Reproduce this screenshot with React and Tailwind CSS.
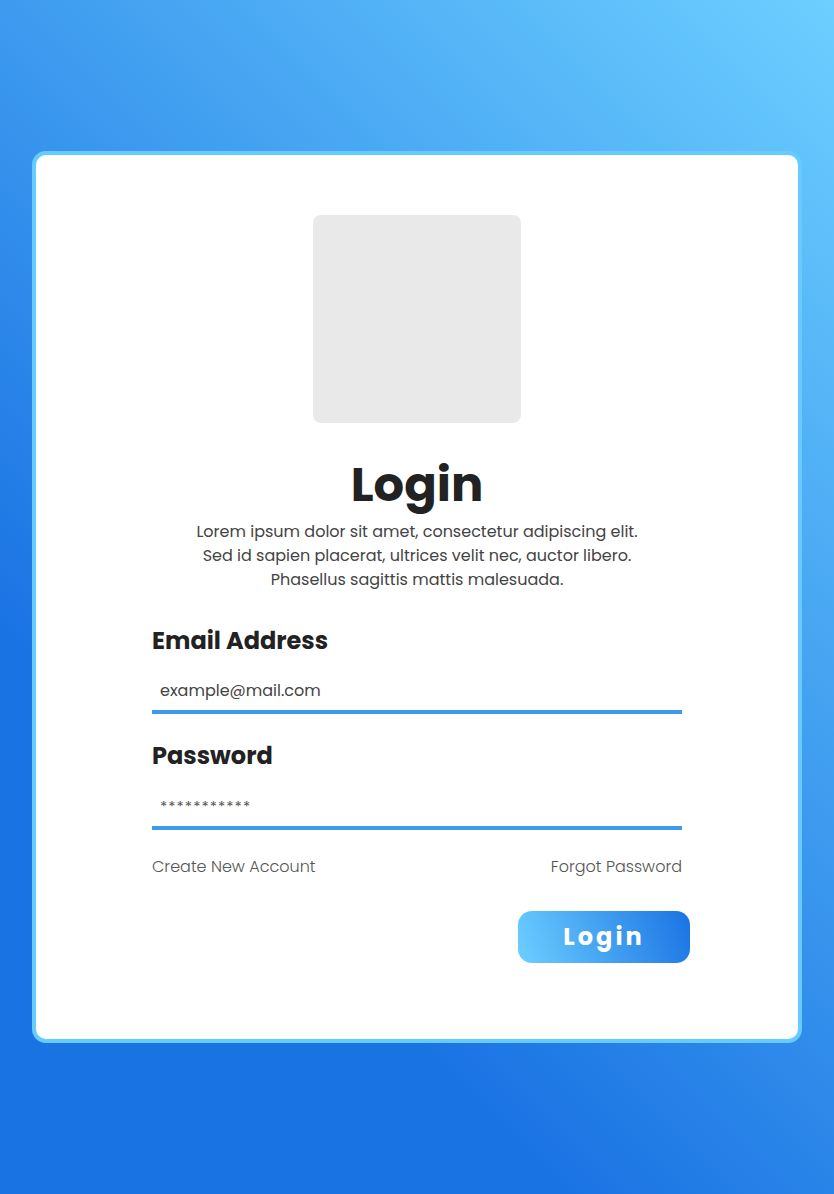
export default function App() {
  const font = { fontFamily: '"Poppins", "Noto Sans", "DejaVu Sans", sans-serif' };
  return (
    <div
      className="w-[834px] h-[1194px] bg-[linear-gradient(225deg,#6ccfff_0%,#1a73e3_72%,#1a73e3_100%)] flex flex-col items-center pt-[151px]"
      style={font}
    >
      <div className="w-[770px] h-[892px] rounded-[14px] border-4 border-[#66ccff] bg-white flex flex-col items-center pt-[60px]">
        <div className="w-[208px] h-[208px] rounded-[8px] bg-[#e9e9e9]" />
        <h1 className="mt-[34px] text-[48px] leading-[56px] font-bold text-[#222222]">Login</h1>
        <p className="mt-[7px] text-[16px] leading-[24px] text-[#444444] text-center">
          Lorem ipsum dolor sit amet, consectetur adipiscing elit.
          <br />
          Sed id sapien placerat, ultrices velit nec, auctor libero.
          <br />
          Phasellus sagittis mattis malesuada.
        </p>
        <div className="w-[530px] mt-[34px] flex flex-col">
          <label className="text-[24px] leading-[30px] font-bold text-[#222222]">Email Address</label>
          <div className="mt-[23px] h-[24px] pl-[8px] text-[16px] leading-[24px] text-[#444444]">example@mail.com</div>
          <div className="mt-[7px] h-[4px] bg-[#3d9be9]" />
          <label className="mt-[27px] text-[24px] leading-[30px] font-bold text-[#222222]">Password</label>
          <div className="mt-[24px] h-[24px] pl-[8px] text-[15px] leading-[24px] tracking-[1px] text-[#555555]">***********</div>
          <div className="mt-[7px] h-[4px] bg-[#3d9be9]" />
          <div className="mt-[25px] flex justify-between text-[16px] leading-[24px] font-light text-[#555555]">
            <span>Create New Account</span>
            <span>Forgot Password</span>
          </div>
          <div className="mt-[32px] flex justify-end -mr-[8px]">
            <button className="w-[172px] h-[52px] rounded-[14px] bg-[linear-gradient(70deg,#6ccfff_0%,#1a73e3_100%)] text-white text-[24px] font-bold tracking-[3px] flex items-center justify-center">
              Login
            </button>
          </div>
        </div>
      </div>
    </div>
  );
}
